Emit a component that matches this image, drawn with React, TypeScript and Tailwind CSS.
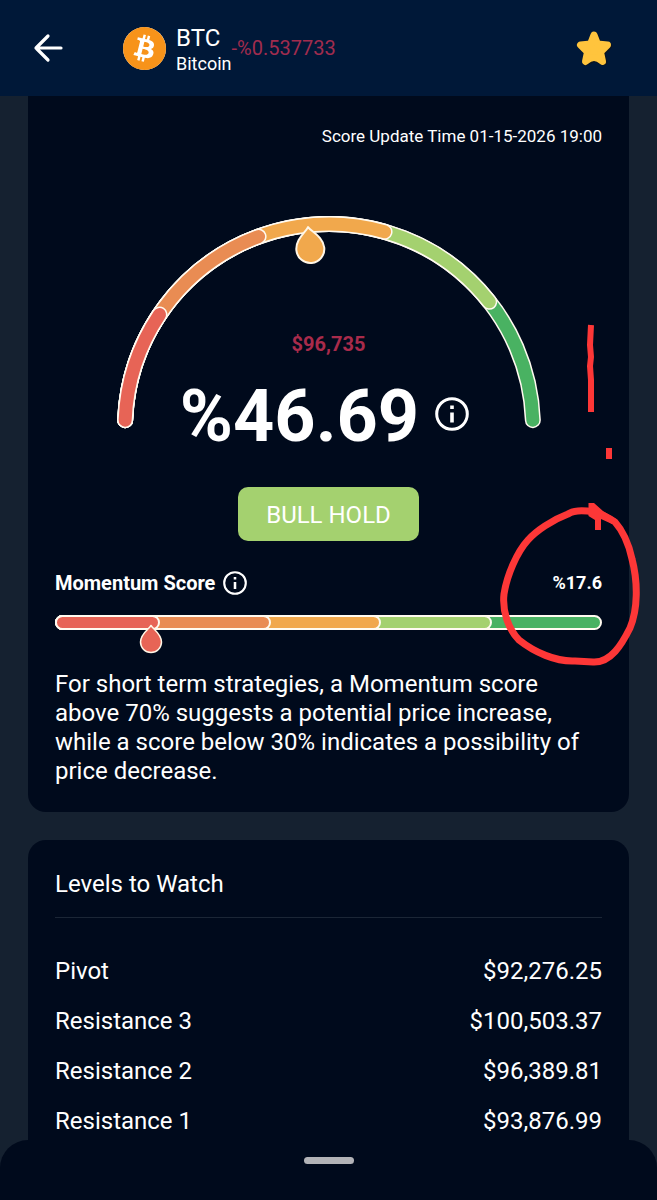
import { SiBitcoin } from "react-icons/si"

const COLORS = ["#e76456", "#e98c53", "#f1a84c", "#a4d16f", "#49b262"]

const levels = [
  { name: "Pivot", value: "$92,276.25" },
  { name: "Resistance 3", value: "$100,503.37" },
  { name: "Resistance 2", value: "$96,389.81" },
  { name: "Resistance 1", value: "$93,876.99" },
]

// Gauge geometry, in the units of its viewBox
const CX = 212
const CY = 212
const R = 204
const CAP = 2.2

function pointAt(deg: number) {
  const rad = (deg * Math.PI) / 180
  return `${(CX - R * Math.cos(rad)).toFixed(2)} ${(CY - R * Math.sin(rad)).toFixed(2)}`
}

function Drop({ color }: { color: string }) {
  return (
    <path
      d="M0 -21 C-3 -16 -14 -10 -14 1 A14 14 0 0 0 14 1 C14 -10 3 -16 0 -21 Z"
      fill={color}
      stroke="#fff6e6"
      strokeWidth="2"
      strokeLinejoin="round"
    />
  )
}

function InfoIcon({ className }: { className: string }) {
  return (
    <svg viewBox="0 0 34 34" className={className} fill="none" aria-hidden="true">
      <circle cx="17" cy="17" r="15.3" stroke="#fff" strokeWidth="3" />
      <path d="M17 15.5v10M17 8.5v3.6" stroke="#fff" strokeWidth="3.6" />
    </svg>
  )
}

function Gauge({ score }: { score: number }) {
  // Longest arc first, so that each shorter one lies over it with its round end
  const order = [4, 3, 2, 1, 0]

  return (
    <svg viewBox="0 0 424 216" className="w-full" aria-hidden="true">
      {order.map((i) => {
        const d = `M${pointAt(CAP)} A${R} ${R} 0 0 1 ${pointAt(36 * (i + 1) - CAP)}`
        return (
          <g key={i} fill="none" strokeLinecap="round">
            <path d={d} stroke="#fffaf0" strokeWidth="16" />
            <path d={d} stroke={COLORS[i]} strokeWidth="13" />
          </g>
        )
      })}
      <g transform={`rotate(${score * 1.8 - 90} ${CX} ${CY}) translate(${CX} 31)`}>
        <Drop color={COLORS[2]} />
      </g>
    </svg>
  )
}

function MomentumBar({ score }: { score: number }) {
  const stops = [100, 79.8, 59.6, 39.4, 19.2]

  return (
    <div className="relative h-[15px]">
      {stops.map((stop, i) => (
        <div
          key={stop}
          className="absolute inset-y-0 left-0 rounded-full border-2 border-[#fffaf0]"
          style={{ width: `${stop}%`, backgroundColor: COLORS[4 - i] }}
        />
      ))}
      <svg
        viewBox="-16 -23 32 40"
        className="absolute top-2 h-8 w-6 -translate-x-1/2"
        style={{ left: `${score}%` }}
        aria-hidden="true"
      >
        <Drop color={COLORS[0]} />
      </svg>
    </div>
  )
}

function Annotations() {
  return (
    <svg
      viewBox="0 0 150 350"
      className="pointer-events-none absolute top-[320px] left-full -ml-[157px] h-[350px] w-[150px]"
      fill="none"
      stroke="#fd3737"
      strokeLinejoin="round"
      aria-hidden="true"
    >
      <path d="M91 5 L90 25 L91 37 L90 46 L91 60 L91 92" strokeWidth="6" />
      <path d="M109 128 V139" strokeWidth="6" />
      <path
        d="M94 192 C82 190 74 190 68 194 C52 200 36 211 28 220 C17 232 7 255 4 274 C2 292 9 310 19 320 C34 332 56 342 75 341 L93 342 C111 343 122 324 130 308 C138 289 138 262 132 239 C129 225 123 211 115 202 C108 197 101 194 94 192 Z"
        strokeWidth="7"
      />
      <path
        d="M88.500 183 L94 183 L103 191 L116 199 L112 204 L101 199 L101 210 L95 210 L95 200 L88.500 196 Z"
        fill="#fd3737"
        stroke="none"
      />
    </svg>
  )
}

export default function App() {
  return (
    <div className="relative min-h-screen overflow-x-hidden bg-[#152130] font-['Roboto',sans-serif] text-white">
      <header className="flex h-24 items-center bg-[#001838] pr-11 pl-8">
        <button aria-label="Back" className="size-8">
          <svg viewBox="0 0 32 32" fill="none" stroke="#fff" strokeWidth="3.2" strokeLinecap="round" aria-hidden="true">
            <path d="M29 16H4M16 4L4 16L16 28" strokeLinejoin="round" />
          </svg>
        </button>
        <div className="ml-[59px] size-[43px] rounded-full bg-white">
          <SiBitcoin className="size-full text-[#f7931a]" />
        </div>
        <div className="ml-[10px] pt-1">
          <h1 className="text-2xl leading-7">BTC</h1>
          <p className="text-lg leading-6">Bitcoin</p>
        </div>
        <span className="text-xl text-[#a12c4e]">-%0.537733</span>
        <button aria-label="Favorite" className="ml-auto size-[38px]">
          <svg viewBox="0 0 38 38" aria-hidden="true">
            <g strokeWidth="7" strokeLinejoin="round">
              <path
                d="M20 7L24 16L33.500 17L26.500 24L29 33L20 29L11 33L13.500 24L6 17L16 16Z"
                fill="#0b1420"
                stroke="#0b1420"
              />
              <path
                d="M19 6L22.500 15L32.500 16L25.500 23L27.500 32.500Q23 28.500 19 28.500Q15 28.500 10.500 32.500L12.500 23L5.500 16L15.500 15Z"
                fill="#ffc43d"
                stroke="#ffc43d"
              />
            </g>
          </svg>
        </button>
      </header>

      <main className="flex flex-col gap-7 px-7">
        <section className="rounded-b-[18px] bg-[#000a1c] px-[27px] pt-7 pb-[26px]">
          <p className="text-right text-[17px] leading-6">Score Update Time 01-15-2026 19:00</p>

          <div className="mx-auto mt-[68px] grid max-w-[424px]">
            <div className="col-start-1 row-start-1">
              <Gauge score={46.69} />
            </div>
            <div className="col-start-1 row-start-1 flex flex-col items-center pt-[114px]">
              <p className="text-xl leading-7 font-bold text-[#a92b4b]">$96,735</p>
              <div className="mt-[17px] flex items-center gap-4 pr-2">
                <strong className="pt-[6px] text-7xl font-bold">%46.69</strong>
                <button aria-label="About the score">
                  <InfoIcon className="size-[34px]" />
                </button>
              </div>
            </div>
          </div>

          <div className="mt-[34px] flex justify-center">
            <button className="h-[54px] rounded-[10px] bg-[#a4d16f] px-7 pt-[2px] text-2xl">BULL HOLD</button>
          </div>

          <div className="mt-7 flex items-center gap-2">
            <h2 className="text-xl leading-7 font-bold">Momentum Score</h2>
            <button aria-label="About the momentum score">
              <InfoIcon className="size-6" />
            </button>
            <span className="ml-auto text-lg font-bold">%17.6</span>
          </div>
          <div className="mt-[18px]">
            <MomentumBar score={17.6} />
          </div>
          <p className="mt-10 text-2xl leading-[29px]">
            For short term strategies, a Momentum score above 70% suggests a potential price increase, while a score
            below 30% indicates a possibility of price decrease.
          </p>
        </section>

        <section className="rounded-t-[18px] bg-[#000a1c] px-[27px] pt-7 pb-16">
          <h2 className="border-b border-[#1b2636] pb-4 text-2xl leading-[33px]">Levels to Watch</h2>
          <table className="mt-7 w-full text-2xl">
            <tbody>
              {levels.map((level) => (
                <tr key={level.name} className="h-[50px]">
                  <th scope="row" className="text-left font-normal">
                    {level.name}
                  </th>
                  <td className="text-right">{level.value}</td>
                </tr>
              ))}
            </tbody>
          </table>
        </section>
      </main>

      <Annotations />

      {/* Bottom sheet, collapsed to its handle */}
      <div className="fixed inset-x-0 bottom-0 flex h-[60px] justify-center rounded-t-[28px] bg-[#000a1c] pt-[17px]">
        <div className="h-[7px] w-[50px] rounded-full bg-[#b2b3b7]" />
      </div>
    </div>
  )
}
